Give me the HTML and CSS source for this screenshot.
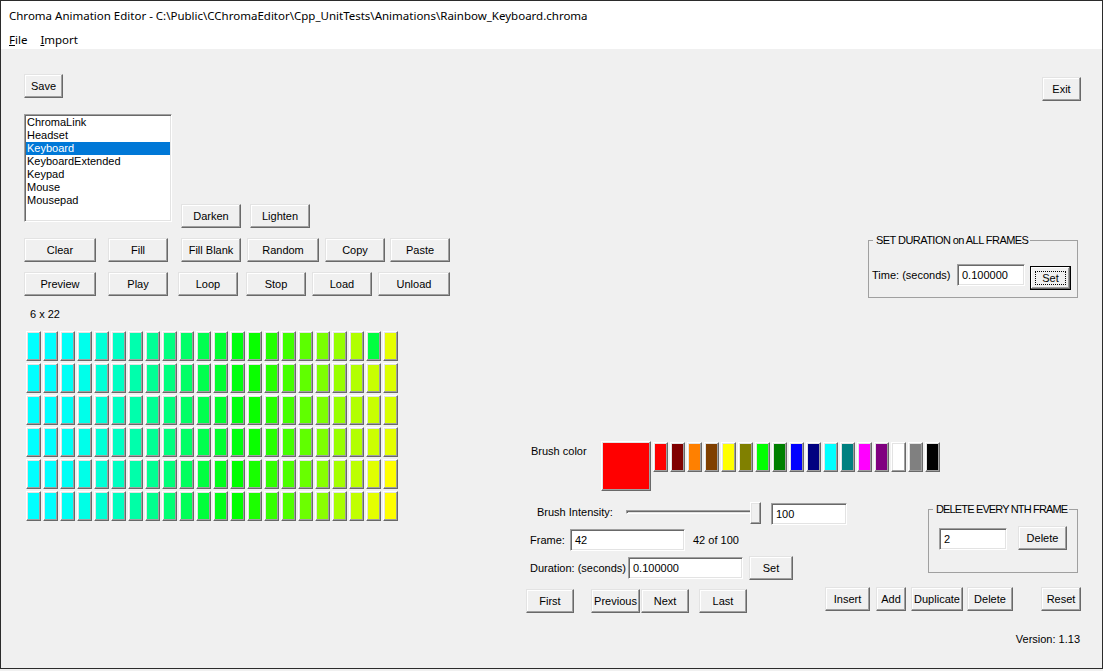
FILE: index.html
```html
<!DOCTYPE html>
<html>
<head>
<meta charset="utf-8">
<title>Chroma Animation Editor</title>
<link rel="stylesheet" href="styles.css">
</head>
<body>
<div class="window">
  <div class="titlebar">Chroma Animation Editor - C:\Public\CChromaEditor\Cpp_UnitTests\Animations\Rainbow_Keyboard.chroma</div>
  <div class="menubar"><span class="menu"><u>F</u>ile</span><span class="menu"><u>I</u>mport</span></div>
  <div class="client">
    <div class="toprow">
      <button class="btn w39">Save</button>
      <button class="btn w39 exit">Exit</button>
    </div>
    <div class="mid">
      <div class="leftctl">
        <div class="r1">
          <div class="listbox">
            <div class="item">ChromaLink</div>
            <div class="item">Headset</div>
            <div class="item sel">Keyboard</div>
            <div class="item">KeyboardExtended</div>
            <div class="item">Keypad</div>
            <div class="item">Mouse</div>
            <div class="item">Mousepad</div>
          </div>
          <button class="btn w60 darken">Darken</button>
          <button class="btn w60 lighten">Lighten</button>
        </div>
        <div class="r2">
          <button class="btn w72">Clear</button>
          <button class="btn w60 ml12">Fill</button>
          <button class="btn w60 ml13">Fill Blank</button>
          <button class="btn w72 ml6">Random</button>
          <button class="btn w60 ml6">Copy</button>
          <button class="btn w60 ml5">Paste</button>
        </div>
        <div class="r3">
          <button class="btn w72">Preview</button>
          <button class="btn w60 ml12">Play</button>
          <button class="btn w60 ml10">Loop</button>
          <button class="btn w60 ml8">Stop</button>
          <button class="btn w60 ml6">Load</button>
          <button class="btn w72 ml6">Unload</button>
        </div>
      </div>
      <fieldset class="group durgroup">
        <legend>SET DURATION on ALL FRAMES</legend>
        <div class="durrow">
          <span class="durlabel">Time: (seconds)</span>
          <div class="edit w68">0.100000</div>
          <button class="btn default w41 setall">Set</button>
        </div>
      </fieldset>
    </div>
    <div class="lower">
      <div class="gridarea">
        <div class="sizelabel">6 x 22</div>
        <div class="cells">
          <div class="cell" style="background:#00ffff"></div><div class="cell" style="background:#00ffff"></div><div class="cell" style="background:#00fff8"></div><div class="cell" style="background:#00ffec"></div><div class="cell" style="background:#00ffd8"></div><div class="cell" style="background:#00ffc6"></div><div class="cell" style="background:#00ffae"></div><div class="cell" style="background:#00ff96"></div><div class="cell" style="background:#00ff80"></div><div class="cell" style="background:#00ff68"></div><div class="cell" style="background:#00ff50"></div><div class="cell" style="background:#00ff32"></div><div class="cell" style="background:#00ff10"></div><div class="cell" style="background:#08ff00"></div><div class="cell" style="background:#22ff00"></div><div class="cell" style="background:#40ff00"></div><div class="cell" style="background:#5cff00"></div><div class="cell" style="background:#7aff00"></div><div class="cell" style="background:#96ff00"></div><div class="cell" style="background:#b0ff00"></div><div class="cell" style="background:#00ff40"></div><div class="cell" style="background:#e6ff00"></div>
          <div class="cell" style="background:#00ffff"></div><div class="cell" style="background:#00ffff"></div><div class="cell" style="background:#00fff6"></div><div class="cell" style="background:#00ffea"></div><div class="cell" style="background:#00ffd8"></div><div class="cell" style="background:#00ffc4"></div><div class="cell" style="background:#00ffac"></div><div class="cell" style="background:#00ff94"></div><div class="cell" style="background:#00ff7e"></div><div class="cell" style="background:#00ff66"></div><div class="cell" style="background:#00ff4e"></div><div class="cell" style="background:#00ff30"></div><div class="cell" style="background:#00ff10"></div><div class="cell" style="background:#0aff00"></div><div class="cell" style="background:#26ff00"></div><div class="cell" style="background:#44ff00"></div><div class="cell" style="background:#60ff00"></div><div class="cell" style="background:#7eff00"></div><div class="cell" style="background:#98ff00"></div><div class="cell" style="background:#b2ff00"></div><div class="cell" style="background:#c8ff00"></div><div class="cell" style="background:#dcff00"></div>
          <div class="cell" style="background:#00ffff"></div><div class="cell" style="background:#00ffff"></div><div class="cell" style="background:#00fff6"></div><div class="cell" style="background:#00ffea"></div><div class="cell" style="background:#00ffd8"></div><div class="cell" style="background:#00ffc4"></div><div class="cell" style="background:#00ffac"></div><div class="cell" style="background:#00ff94"></div><div class="cell" style="background:#00ff7e"></div><div class="cell" style="background:#00ff66"></div><div class="cell" style="background:#00ff4e"></div><div class="cell" style="background:#00ff30"></div><div class="cell" style="background:#00ff10"></div><div class="cell" style="background:#0aff00"></div><div class="cell" style="background:#26ff00"></div><div class="cell" style="background:#44ff00"></div><div class="cell" style="background:#60ff00"></div><div class="cell" style="background:#7eff00"></div><div class="cell" style="background:#98ff00"></div><div class="cell" style="background:#b2ff00"></div><div class="cell" style="background:#c8ff00"></div><div class="cell" style="background:#d8ff00"></div>
          <div class="cell" style="background:#00ffff"></div><div class="cell" style="background:#00ffff"></div><div class="cell" style="background:#00fff6"></div><div class="cell" style="background:#00ffea"></div><div class="cell" style="background:#00ffd8"></div><div class="cell" style="background:#00ffc4"></div><div class="cell" style="background:#00ffac"></div><div class="cell" style="background:#00ff94"></div><div class="cell" style="background:#00ff7e"></div><div class="cell" style="background:#00ff66"></div><div class="cell" style="background:#00ff4e"></div><div class="cell" style="background:#00ff30"></div><div class="cell" style="background:#00ff10"></div><div class="cell" style="background:#0aff00"></div><div class="cell" style="background:#26ff00"></div><div class="cell" style="background:#44ff00"></div><div class="cell" style="background:#60ff00"></div><div class="cell" style="background:#7eff00"></div><div class="cell" style="background:#98ff00"></div><div class="cell" style="background:#b2ff00"></div><div class="cell" style="background:#ccff00"></div><div class="cell" style="background:#e4ff00"></div>
          <div class="cell" style="background:#00ffff"></div><div class="cell" style="background:#00ffff"></div><div class="cell" style="background:#00fff6"></div><div class="cell" style="background:#00ffe8"></div><div class="cell" style="background:#00ffd6"></div><div class="cell" style="background:#00ffc2"></div><div class="cell" style="background:#00ffaa"></div><div class="cell" style="background:#00ff92"></div><div class="cell" style="background:#00ff7a"></div><div class="cell" style="background:#00ff5e"></div><div class="cell" style="background:#00ff40"></div><div class="cell" style="background:#00ff1c"></div><div class="cell" style="background:#00ff00"></div><div class="cell" style="background:#18ff00"></div><div class="cell" style="background:#30ff00"></div><div class="cell" style="background:#4cff00"></div><div class="cell" style="background:#68ff00"></div><div class="cell" style="background:#88ff00"></div><div class="cell" style="background:#a4ff00"></div><div class="cell" style="background:#bcff00"></div><div class="cell" style="background:#e0ff00"></div><div class="cell" style="background:#ffff00"></div>
          <div class="cell" style="background:#00ffff"></div><div class="cell" style="background:#00ffff"></div><div class="cell" style="background:#00fff4"></div><div class="cell" style="background:#00ffe6"></div><div class="cell" style="background:#00ffd4"></div><div class="cell" style="background:#00ffc0"></div><div class="cell" style="background:#00ffa6"></div><div class="cell" style="background:#00ff8e"></div><div class="cell" style="background:#00ff74"></div><div class="cell" style="background:#00ff58"></div><div class="cell" style="background:#00ff3a"></div><div class="cell" style="background:#00ff18"></div><div class="cell" style="background:#00ff00"></div><div class="cell" style="background:#1cff00"></div><div class="cell" style="background:#34ff00"></div><div class="cell" style="background:#50ff00"></div><div class="cell" style="background:#6cff00"></div><div class="cell" style="background:#8aff00"></div><div class="cell" style="background:#a8ff00"></div><div class="cell" style="background:#c0ff00"></div><div class="cell" style="background:#e4ff00"></div><div class="cell" style="background:#ffff00"></div>
        </div>
      </div>
      <div class="rightarea">
        <div class="brushrow">
          <span class="brushlabel">Brush color</span>
          <div class="cell bigswatch" style="background:#ff0000"></div>
          <div class="palette">
            <div class="cell" style="background:#ff0000"></div><div class="cell" style="background:#800000"></div><div class="cell" style="background:#ff8000"></div><div class="cell" style="background:#804000"></div><div class="cell" style="background:#ffff00"></div><div class="cell" style="background:#808000"></div><div class="cell" style="background:#00ff00"></div><div class="cell" style="background:#008000"></div><div class="cell" style="background:#0000ff"></div><div class="cell" style="background:#000080"></div><div class="cell" style="background:#00ffff"></div><div class="cell" style="background:#008080"></div><div class="cell" style="background:#ff00ff"></div><div class="cell" style="background:#800080"></div><div class="cell" style="background:#ffffff"></div><div class="cell" style="background:#808080"></div><div class="cell" style="background:#000000"></div>
          </div>
        </div>
        <div class="ctlupper">
          <div class="ctlstack">
            <div class="introw">
              <span class="intlabel">Brush Intensity:</span>
              <div class="slider"><div class="track"></div><div class="thumb"></div></div>
              <div class="edit w76 intedit">100</div>
            </div>
            <div class="framerow">
              <span class="framelabel">Frame:</span>
              <div class="edit w115">42</div>
              <span class="framecount">42 of 100</span>
            </div>
            <div class="durationrow">
              <span class="durationlabel">Duration: (seconds)</span>
              <div class="edit w115">0.100000</div>
              <button class="btn w44 ml6 setone">Set</button>
            </div>
          </div>
          <fieldset class="group delgroup">
            <legend>DELETE EVERY NTH FRAME</legend>
            <div class="delrow">
              <div class="edit w68">2</div>
              <button class="btn w49 delbtn">Delete</button>
            </div>
          </fieldset>
        </div>
        <div class="ctllower">
          <div class="nav">
            <button class="btn w48">First</button>
            <button class="btn w49 ml17">Previous</button>
            <button class="btn w48 ml1">Next</button>
            <button class="btn w48 ml10">Last</button>
          </div>
          <div class="actions">
            <button class="btn w45">Insert</button>
            <button class="btn w30 ml6">Add</button>
            <button class="btn w52 ml5">Duplicate</button>
            <button class="btn w46 ml4">Delete</button>
            <button class="btn w40 ml28">Reset</button>
          </div>
        </div>
        <div class="version">Version: 1.13</div>
      </div>
    </div>
  </div>
</div>
</body>
</html>
```

FILE: styles.css
```css
* { box-sizing: border-box; }

body {
  margin: 0;
  background: #f0f0f0;
  font-family: "Liberation Sans", Arial, sans-serif;
  font-size: 11px;
  color: #000;
}

.window {
  width: 1103px;
  height: 669px;
  border: 1px solid #2b2b2b;
  background: #f0f0f0;
  display: flex;
  flex-direction: column;
  overflow: hidden;
}

.titlebar {
  height: 30px;
  background: #fff;
  padding-left: 8px;
  font: 11.5px/30px "Noto Sans", sans-serif;
  white-space: nowrap;
}

.menubar {
  height: 18px;
  background: #fff;
  display: flex;
  padding-left: 8px;
  font: 11.5px/18px "Noto Sans", sans-serif;
}
.menu { margin-right: 13px; }

.client {
  flex: 1;
  display: flex;
  flex-direction: column;
  padding: 0 21px 0 23px;
}

/* buttons */
.btn {
  height: 24px;
  padding: 0;
  margin: 0;
  font: 11px "Liberation Sans", Arial, sans-serif;
  color: #000;
  background: #f0f0f0;
  border: 1px solid;
  border-color: #e3e3e3 #696969 #696969 #e3e3e3;
  box-shadow: inset -1px -1px #a0a0a0, inset 1px 1px #fff;
  display: flex;
  align-items: center;
  justify-content: center;
  flex: none;
  white-space: nowrap;
}
.btn.default {
  position: relative;
  border-color: #000;
  box-shadow: inset -1px -1px #696969, inset 1px 1px #fff, inset -2px -2px #a0a0a0;
}
.btn.default::after {
  content: "";
  position: absolute;
  left: 4px; top: 4px; right: 4px; bottom: 4px;
  border: 1px dotted #000;
}

.w30 { width: 30px; } .w39 { width: 39px; } .w40 { width: 40px; } .w41 { width: 41px; }
.w44 { width: 44px; } .w45 { width: 45px; } .w46 { width: 46px; } .w48 { width: 48px; }
.w49 { width: 49px; } .w52 { width: 52px; } .w60 { width: 60px; } .w68 { width: 68px; }
.w72 { width: 72px; } .w76 { width: 76px; } .w115 { width: 115px; }
.ml1 { margin-left: 1px; } .ml4 { margin-left: 4px; } .ml5 { margin-left: 5px; }
.ml6 { margin-left: 6px; } .ml8 { margin-left: 8px; } .ml10 { margin-left: 10px; }
.ml12 { margin-left: 12px; } .ml13 { margin-left: 13px; } .ml17 { margin-left: 17px; }
.ml28 { margin-left: 28px; }

/* edit boxes */
.edit {
  height: 22px;
  background: #fff;
  border: 1px solid;
  border-color: #a0a0a0 #fff #fff #a0a0a0;
  box-shadow: inset 1px 1px #696969, inset -1px -1px #e3e3e3;
  padding-left: 4px;
  line-height: 20px;
  flex: none;
  white-space: nowrap;
}

/* top row */
.toprow {
  display: flex;
  justify-content: space-between;
  align-items: flex-start;
  margin-top: 25px;
  height: 27px;
}
.exit { margin-top: 3px; }

/* middle */
.mid {
  display: flex;
  margin-top: 13px;
  height: 182px;
}
.leftctl { width: 426px; flex: none; }
.r1 { display: flex; align-items: flex-start; height: 114px; }
.listbox {
  width: 148px;
  height: 108px;
  background: #fff;
  border: 1px solid;
  border-color: #a0a0a0 #fff #fff #a0a0a0;
  box-shadow: inset 1px 1px #696969, inset -1px -1px #e3e3e3;
  padding: 1px;
}
.item { height: 13px; line-height: 13px; padding-left: 1px; white-space: nowrap; }
.item.sel { background: #0078d7; color: #fff; }
.darken { margin: 90px 0 0 9px; }
.lighten { margin: 90px 0 0 9px; }
.r2, .r3 { display: flex; margin-top: 10px; }

/* group boxes */
.group {
  margin: 0;
  padding: 0 3px;
  min-width: 0;
  border: 1px solid #a0a0a0;
  flex: none;
}
.group legend {
  padding: 0 2px 0 3px;
  margin-left: 1px;
  line-height: 13px;
  font-size: 11px;
  white-space: nowrap;
}
.durgroup {
  width: 210px;
  height: 64px;
  margin: 120px 3px 0 auto;
  align-self: flex-start;
}
.durgroup legend { letter-spacing: -0.55px; }
.durrow { display: flex; align-items: flex-start; padding-top: 17px; }
.durlabel { width: 85px; line-height: 22px; flex: none; }
.setall { margin: 2px 0 0 5px; }

/* lower */
.lower { display: flex; }
.gridarea { width: 374px; flex: none; }
.sizelabel { margin: 12px 0 0 6px; line-height: 13px; }
.cells {
  margin: 10px 0 0 2px;
  display: grid;
  grid-template-columns: repeat(22, 15px);
  grid-auto-rows: 30px;
  gap: 2px;
}
.cell {
  border: 1px solid;
  border-color: #fff #696969 #696969 #fff;
  box-shadow: inset -1px -1px #a0a0a0, inset 1px 1px #e3e3e3;
}

.rightarea { flex: 1; margin-left: 128px; padding-top: 145px; }

.brushrow { display: flex; align-items: flex-start; height: 50px; }
.brushlabel { width: 75px; padding-left: 5px; margin-top: 4px; line-height: 13px; flex: none; }
.bigswatch { width: 50px; height: 50px; flex: none; }
.palette {
  margin: 1px 0 0 2px;
  display: grid;
  grid-template-columns: repeat(17, 15px);
  grid-auto-rows: 30px;
  gap: 2px;
}

.ctlupper { display: flex; margin-top: 10px; }
.ctlstack { flex: none; }
.introw { display: flex; align-items: flex-start; height: 24px; }
.intlabel { margin-left: 11px; width: 85px; line-height: 22px; flex: none; }
.slider { position: relative; width: 140px; height: 24px; flex: none; }
.track {
  position: absolute;
  left: 4px; top: 9px;
  width: 130px; height: 4px;
  background: #e3e3e3;
  border-top: 1px solid #a0a0a0;
  border-left: 1px solid #a0a0a0;
  border-bottom: 1px solid #fff;
  border-right: 1px solid #fff;
  box-shadow: inset 1px 1px #696969;
}
.thumb {
  position: absolute;
  left: 128px; top: 1px;
  width: 11px; height: 22px;
  background: #f0f0f0;
  border: 1px solid;
  border-color: #fff #696969 #696969 #fff;
  box-shadow: inset -1px -1px #a0a0a0, inset 1px 1px #e3e3e3;
}
.intedit { margin: 2px 0 0 9px; }

.framerow { display: flex; align-items: flex-start; margin-top: 4px; height: 22px; }
.framelabel { margin-left: 4px; width: 40px; line-height: 22px; flex: none; }
.framecount { margin-left: 8px; line-height: 22px; }

.durationrow { display: flex; align-items: flex-start; margin-top: 6px; height: 22px; }
.durationlabel { margin-left: 4px; width: 98px; line-height: 22px; flex: none; }
.setone { margin-top: -1px; }

.delgroup {
  width: 150px;
  height: 70px;
  margin: 2px 3px 0 auto;
  padding: 0 3px;
}
.delgroup legend { margin-left: 1px; letter-spacing: -0.85px; }
.delrow { display: flex; align-items: flex-start; padding: 12px 0 0 7px; }
.delbtn { margin: -2px 0 0 11px; }

.ctllower { display: flex; align-items: flex-start; margin-top: 8px; }
.nav { display: flex; margin-top: 2px; }
.actions { display: flex; margin-left: auto; }

.version { margin-top: 20px; text-align: right; padding-right: 1px; line-height: 13px; }
```
